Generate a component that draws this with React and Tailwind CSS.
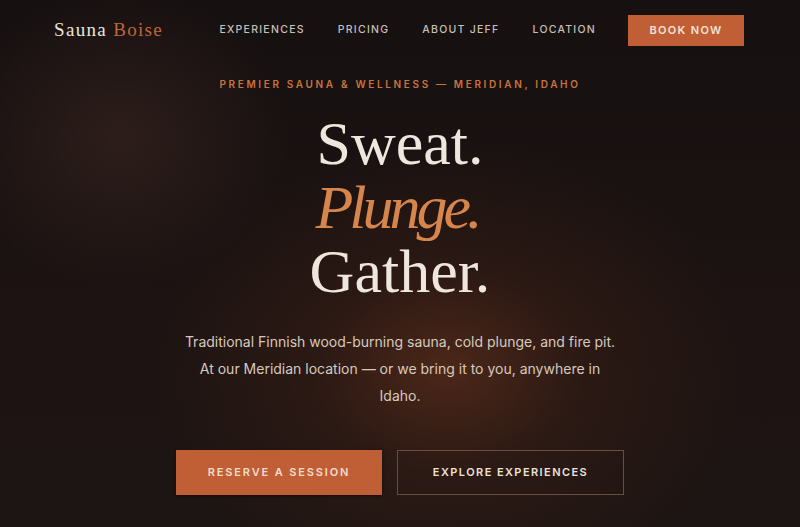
export default function App() {
  const sans = { fontFamily: 'Inter, "DM Sans", "Noto Sans", sans-serif' };
  return (
    <div
      className="relative w-full h-[527px] overflow-hidden bg-[#191110] bg-[radial-gradient(ellipse_300px_230px_at_56%_70%,rgba(115,55,30,0.55)_0%,rgba(70,35,22,0.35)_45%,rgba(0,0,0,0)_100%),radial-gradient(ellipse_170px_150px_at_15%_26%,rgba(70,45,38,0.45)_0%,rgba(0,0,0,0)_100%),linear-gradient(180deg,#161010_0%,#1c1312_60%,#1d1513_100%)]"
      style={sans}
    >
      <header className="flex items-center justify-between h-[60px] pl-[54px] pr-[56px]">
        <div
          className="text-[19px] tracking-[0.07em] text-[#ece3da]"
          style={{ fontFamily: '"Liberation Serif", serif' }}
        >
          Sauna <span className="text-[#c0653a]">Boise</span>
        </div>
        <nav className="flex items-center">
          <div className="flex items-center gap-[33px] mr-[32px] text-[10.5px] tracking-[0.12em] text-[#c8bfb7] font-medium">
            <span>EXPERIENCES</span>
            <span>PRICING</span>
            <span>ABOUT JEFF</span>
            <span>LOCATION</span>
          </div>
          <div className="flex items-center justify-center w-[116px] h-[31px] bg-[#c05f35] text-[#f4e2d6] text-[11px] tracking-[0.12em] font-semibold">
            BOOK NOW
          </div>
        </nav>
      </header>

      <main className="flex flex-col items-center">
        <div className="mt-[19px] text-[10px] tracking-[0.265em] text-[#c8743e] font-semibold leading-none">
          PREMIER SAUNA &amp; WELLNESS — MERIDIAN, IDAHO
        </div>
        <h1
          className="mt-[22px] flex flex-col items-center text-[62px] leading-[64px] text-[#efe6dd]"
          style={{ fontFamily: '"Liberation Serif", serif' }}
        >
          <span>Sweat.</span>
          <span className="italic text-[#d6864c] tracking-[-0.065em] pr-[6px]">Plunge.</span>
          <span>Gather.</span>
        </h1>
        <p className="mt-[25px] text-center text-[14px] leading-[27px] text-[#d6cabe]">
          Traditional Finnish wood-burning sauna, cold plunge, and fire pit.
          <br />
          At our Meridian location — or we bring it to you, anywhere in
          <br />
          Idaho.
        </p>
        <div className="mt-[41px] flex gap-[15px]">
          <div className="flex items-center justify-center w-[206px] h-[45px] bg-[#c05f35] text-[#f3dccb] text-[11px] tracking-[0.17em] font-semibold shadow-[0_1px_3px_rgba(0,0,0,0.5)]">
            RESERVE A SESSION
          </div>
          <div className="flex items-center justify-center w-[227px] h-[45px] border border-[#6a4c40] text-[#ebe0d6] text-[11px] tracking-[0.13em] font-semibold">
            EXPLORE EXPERIENCES
          </div>
        </div>
      </main>
    </div>
  );
}
